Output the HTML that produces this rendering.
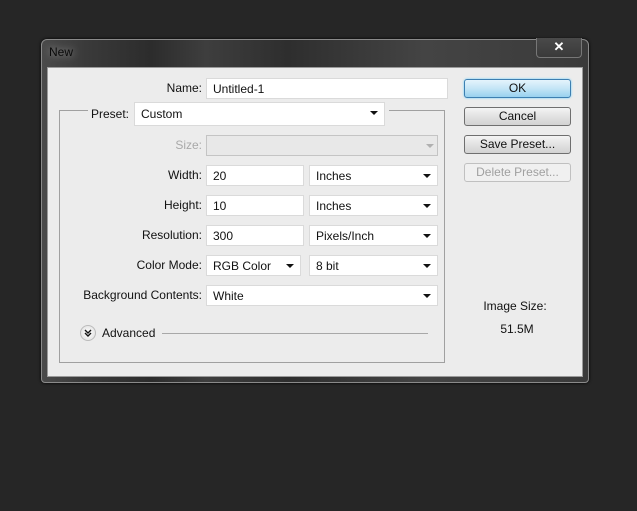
<!DOCTYPE html>
<html><head><style>
*{margin:0;padding:0;box-sizing:border-box}
body{width:637px;height:511px;background:#262626;position:relative;overflow:hidden;font-family:"Liberation Sans",sans-serif;font-size:12px;color:#111}
.a{position:absolute}
.win{left:41px;top:39px;width:548px;height:344px;border:1px solid #8a8a8a;border-radius:6px 6px 4px 4px;background:linear-gradient(90deg,#4a4a4a 0%,#3a3a3a 8%,#2c2c2c 20%,#3e3e3e 30%,#2e2e2e 45%,#444 70%,#3a3a3a 100%);box-shadow:0 0 3px #000}
.panel{left:47px;top:67px;width:536px;height:310px;background:#ececec;border:1px solid #9a9a9a}
.lbl{text-align:right;width:200px;line-height:14px}
.f{background:#fff;border:1px solid #dadada;height:21px;line-height:20px;padding-left:6px}
.dd::after{content:"";position:absolute;right:6px;top:8px;border-left:4px solid transparent;border-right:4px solid transparent;border-top:4px solid #111}
.btn{left:464px;width:107px;height:19px;border:1px solid #6f6f6f;border-radius:3px;background:linear-gradient(#f4f4f4,#e2e2e2 50%,#d2d2d2);text-align:center;line-height:17px}
</style></head><body>
<div class="a win"></div>
<div class="a" style="left:49px;top:45px;color:#0a0a0a;font-size:12px;text-shadow:0 0 8px #aaa">New</div>
<div class="a" style="left:536px;top:38px;width:46px;height:20px;border:1px solid #777;border-top:none;border-radius:0 0 4px 4px;background:linear-gradient(#4a4a4a,#3a3a3a);color:#fff;text-align:center;font-weight:bold;font-size:13px;line-height:18px">✕</div>
<div class="a panel"></div>
<div class="a" style="left:59px;top:110px;width:386px;height:253px;border:1px solid #a0a0a0"></div>
<div class="a" style="left:88px;top:104px;width:301px;height:10px;background:#ececec"></div>

<div class="a lbl" style="left:2px;top:81px">Name:</div>
<div class="a f" style="left:206px;top:78px;width:242px">Untitled-1</div>
<div class="a" style="left:91px;top:107px">Preset:</div>
<div class="a f dd" style="left:134px;top:102px;width:251px;height:24px;line-height:23px">Custom</div>
<div class="a lbl" style="left:2px;top:138px;color:#a8a8a8">Size:</div>
<div class="a" style="left:206px;top:135px;width:232px;height:21px;border:1px solid #c4c4c4;background:#e8e8e8"></div>
<div class="a" style="left:426px;top:144px;border-left:4px solid transparent;border-right:4px solid transparent;border-top:4px solid #b0b0b0"></div>

<div class="a lbl" style="left:2px;top:168px">Width:</div>
<div class="a f" style="left:206px;top:165px;width:98px">20</div>
<div class="a f dd" style="left:309px;top:165px;width:129px">Inches</div>
<div class="a lbl" style="left:2px;top:198px">Height:</div>
<div class="a f" style="left:206px;top:195px;width:98px">10</div>
<div class="a f dd" style="left:309px;top:195px;width:129px">Inches</div>
<div class="a lbl" style="left:2px;top:228px">Resolution:</div>
<div class="a f" style="left:206px;top:225px;width:98px">300</div>
<div class="a f dd" style="left:309px;top:225px;width:129px">Pixels/Inch</div>
<div class="a lbl" style="left:2px;top:258px">Color Mode:</div>
<div class="a f dd" style="left:206px;top:255px;width:95px">RGB Color</div>
<div class="a f dd" style="left:309px;top:255px;width:129px">8 bit</div>
<div class="a lbl" style="left:2px;top:288px">Background Contents:</div>
<div class="a f dd" style="left:206px;top:285px;width:232px">White</div>

<div class="a" style="left:80px;top:325px;width:16px;height:16px;border-radius:50%;border:1px solid #bbb;background:radial-gradient(#fff,#ddd)"></div>
<svg class="a" style="left:80px;top:325px" width="16" height="16"><path d="M5 5 L8 8 L11 5 M5 8 L8 11 L11 8" fill="none" stroke="#111" stroke-width="1.4"/></svg>
<div class="a" style="left:102px;top:326px">Advanced</div>
<div class="a" style="left:162px;top:333px;width:266px;height:1px;background:#a8a8a8"></div>

<div class="a btn" style="top:79px;border-color:#3c7fb1;background:linear-gradient(#e5f4fc,#c4e5f6 50%,#98d1ef);box-shadow:0 0 2px #6cf">OK</div>
<div class="a btn" style="top:107px">Cancel</div>
<div class="a btn" style="top:135px">Save Preset...</div>
<div class="a btn" style="top:163px;border-color:#c0c0c0;background:#f0f0f0;color:#a0a0a0">Delete Preset...</div>
<div class="a" style="left:464px;top:299px;width:102px;text-align:center">Image Size:</div>
<div class="a" style="left:464px;top:322px;width:106px;text-align:center">51.5M</div>
</body></html>
